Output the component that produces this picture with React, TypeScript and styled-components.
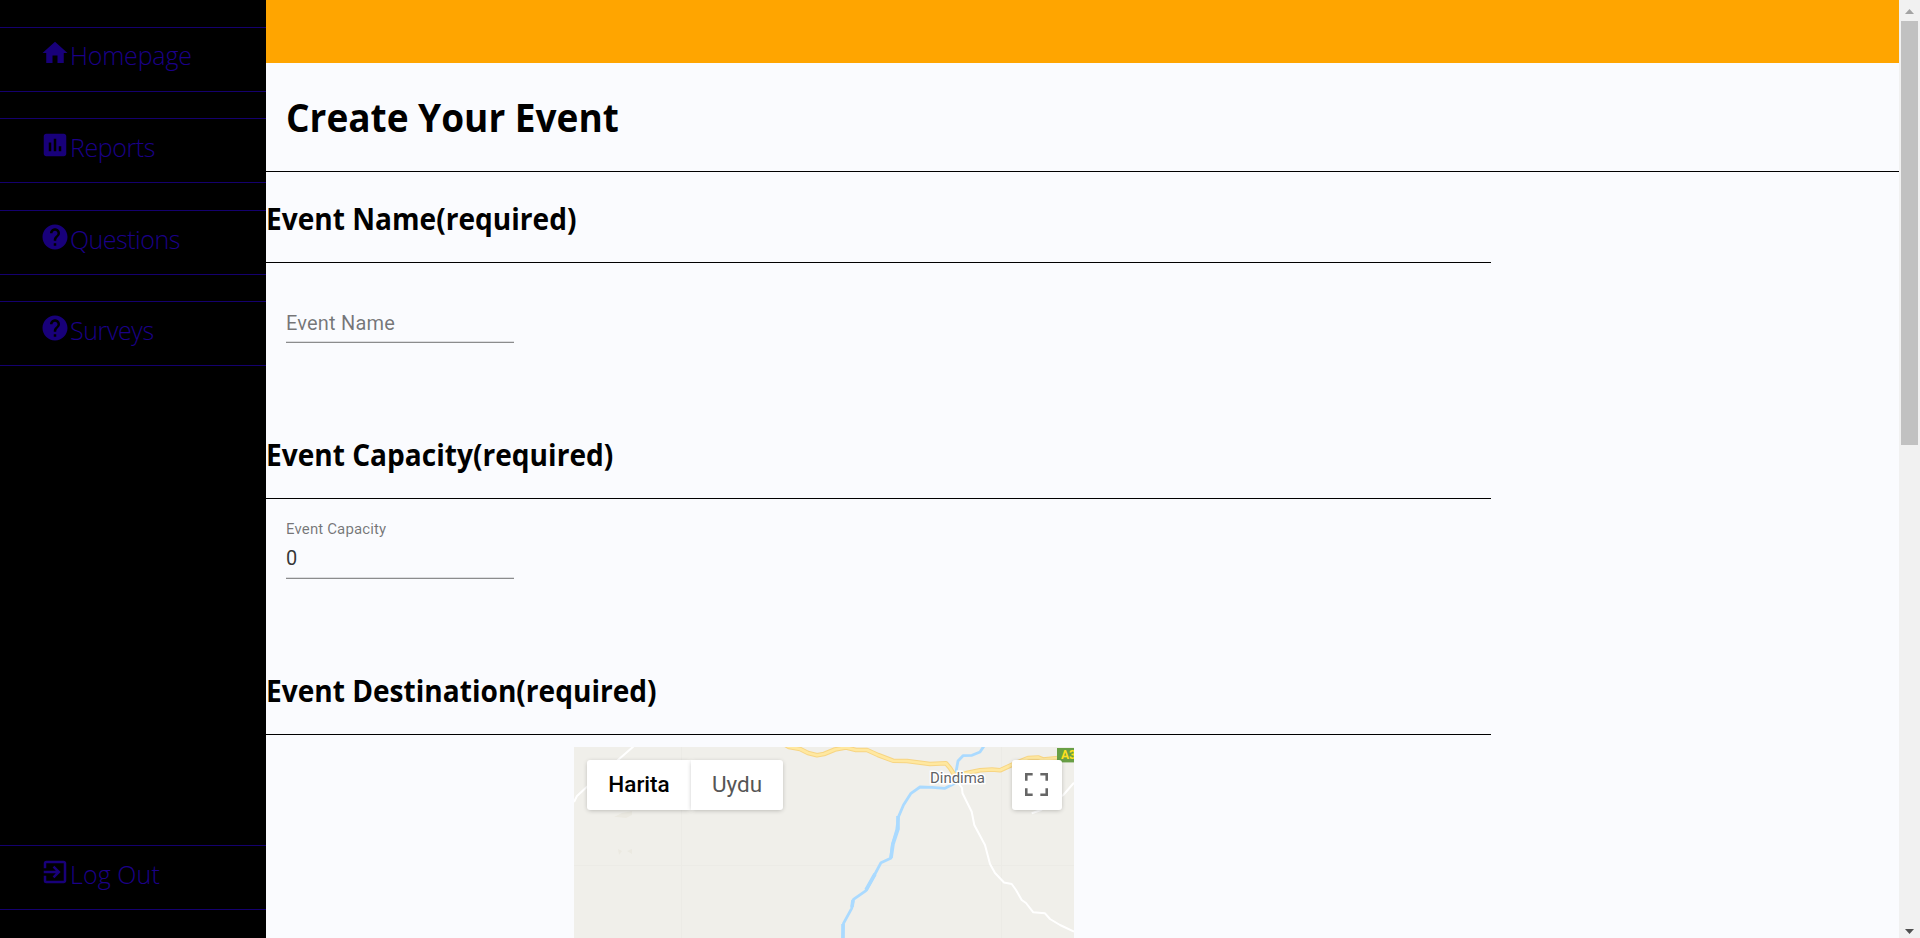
import React from "react";
import styled, { createGlobalStyle } from "styled-components";
import { MdHome, MdAssessment, MdHelp, MdExitToApp } from "react-icons/md";

const GlobalStyle = createGlobalStyle`
  *, *::before, *::after { box-sizing: border-box; }
  body { margin: 0; overflow: hidden; background: #fafbfe; }
`;

const uiFont = `"Segoe UI", "Open Sans", "Noto Sans", sans-serif`;
const inputFont = `Roboto, "Liberation Sans", sans-serif`;

const Page = styled.div`
  display: flex;
  width: 100%;
  height: 938px;
  overflow: hidden;
  background: #fafbfe;
`;

const Sidebar = styled.nav`
  display: flex;
  flex-direction: column;
  justify-content: space-between;
  width: 266px;
  flex: none;
  padding: 27px 0 28px;
  background: #000;
`;

const NavGroup = styled.div`
  display: flex;
  flex-direction: column;
  gap: 26.33px;
`;

const NavItem = styled.a<{ $top?: number }>`
  display: flex;
  height: 65px;
  padding: ${(p) => p.$top ?? 11}px 0 0 40px;
  border-top: 1px solid #14006e;
  border-bottom: 1px solid #14006e;
  color: #18007a;
  svg { width: 30px; height: 30px; flex: none; }
`;

const NavLabel = styled.span<{ $spacing: number }>`
  font: 300 25px/34px ${uiFont};
  letter-spacing: ${(p) => p.$spacing}px;
  color: #1b0088;
  white-space: nowrap;
`;

const Main = styled.main`
  flex: 1;
  min-width: 0;
  overflow: hidden;
`;

const TopBar = styled.header`
  height: 63px;
  background: #ffa500;
`;

const TitleBar = styled.div`
  height: 109px;
  padding: 27px 0 0 20px;
  border-bottom: 1px solid #000;
`;

const Title = styled.h1`
  margin: 0;
  font: 700 40px/54px ${uiFont};
  transform: scaleX(0.925);
  transform-origin: left;
  white-space: nowrap;
`;

const Section = styled.section`
  width: 1225px;
  height: 236px;
`;

const SectionHead = styled.div`
  height: 91px;
  padding-top: 26px;
  border-bottom: 1px solid #000;
`;

const SectionTitle = styled.h2`
  margin: 0;
  font: 700 30px/41px ${uiFont};
  transform: scaleX(0.936);
  transform-origin: left;
  white-space: nowrap;
`;

const Field = styled.label`
  display: flex;
  flex-direction: column;
  width: 228px;
  height: 80px;
  margin-left: 20px;
  border-bottom: 1px solid #8b8c8d;
  box-shadow: inset 0 -1px 0 #dcdde0;
  font-family: ${inputFont};
`;

const FieldLabel = styled.span`
  margin-top: 20px;
  font-size: 15px;
  line-height: 20px;
  letter-spacing: 0.14px;
  color: rgba(0, 0, 0, 0.54);
`;

const Placeholder = styled.span`
  margin-top: 48px;
  font-size: 20px;
  line-height: 24px;
  letter-spacing: 0.19px;
  color: rgba(0, 0, 0, 0.54);
`;

const FieldValue = styled.span`
  margin-top: 7px;
  font-size: 20px;
  line-height: 24px;
  color: rgba(0, 0, 0, 0.8);
`;

const Map = styled.div`
  position: relative;
  width: 500px;
  height: 400px;
  margin: 12px 0 0 308px;
  overflow: hidden;
  background: #f0efea;
  font-family: ${inputFont};
`;

const MapDrawing = styled.svg`
  display: block;
`;

const MapControls = styled.div`
  position: absolute;
  top: 13px;
  left: 13px;
  right: 12px;
  display: flex;
`;

const MapButton = styled.div<{ $width: number; $active?: boolean; $side?: "left" | "right" }>`
  display: flex;
  align-items: center;
  justify-content: center;
  width: ${(p) => p.$width}px;
  height: 50px;
  padding: ${(p) => (p.$side ? "0 0 2px" : "0 1px 1px 0")};
  margin-left: ${(p) => (p.$side ? 0 : "auto")};
  border-radius: ${(p) => (p.$side === "left" ? "3px 0 0 3px" : p.$side === "right" ? "0 3px 3px 0" : "3px")};
  background: #fff;
  box-shadow: 0 1px 5px -1px rgba(0, 0, 0, 0.3);
  font-size: 22.5px;
  font-weight: ${(p) => (p.$active ? 500 : 400)};
  color: ${(p) => (p.$active ? "#000" : "#565656")};
`;

const Scrollbar = styled.div`
  display: flex;
  flex-direction: column;
  align-items: center;
  width: 21px;
  flex: none;
  background: #f1f1f1;
`;

const Thumb = styled.div`
  width: 17px;
  height: 424px;
  background: #c1c1c1;
`;

const Arrow = styled.svg`
  display: block;
  width: 21px;
  height: 21px;
  flex: none;
  &:last-child { margin-top: auto; }
`;

const links = [
  { label: "Homepage", Icon: MdHome, spacing: -0.2, top: 10 },
  { label: "Reports", Icon: MdAssessment, spacing: -0.4 },
  { label: "Questions", Icon: MdHelp, spacing: -0.5 },
  { label: "Surveys", Icon: MdHelp, spacing: -0.4 },
];

const road =
  "M208 -4L215 0L226 2L234 6L243 8.3L250 7L261 2.5L272 0.5L282 3L293 3L304 8L319 13.7L333 14L356 17L372 16.3L376 21L381 29L394 25.7L406 23.3L418 22.5L426 23.3L439 17.3L454 11L464 10.5L469 12.5L484 11";

const river =
  "M410 -1L406 5L398 8.3L389 8.7L384 14L382 25L381.5 36L371 41.3L358 40.3L346 40L337 46.3L329.5 58L324.3 70.3L322.7 83L318.3 98L316.7 111.3L307 115.7L301 127L292 143.7L279.5 152.3L277.7 161.3L269.5 176.3L268.7 192";

function MapView() {
  return (
    <Map>
      <MapDrawing width="500" height="400" viewBox="0 0 500 400" fill="none">
        <path d="M107.5 0V400M427.5 0V400M0 118.5H500" stroke="#ecebe6" />
        <path d="M40 70L48 66L58 64V68L52 71L43 70ZM44 102L48 104L45 108ZM53 104L58 102V107Z" fill="#ebe9e1" />
        <g stroke="#fff" strokeWidth="2" strokeLinejoin="round">
          <path d="M60 -1L44 13L13 39.7L3 49L0 55" />
          <path d="M383 34L388 41L388.5 46.3L397.7 64.7L400.3 78L411 98L416 117L421 126L430 135.5L437.7 137L442 143L447.7 153L452 156L459.3 165.3L471 166.3L476 172L486 178L500 184.7" />
          <path d="M457.7 66.3L467 63L489.3 48L500 35.7" />
        </g>
        <path d={river} stroke="#aadaff" strokeWidth="2.8" strokeLinejoin="round" />
        <path d="M324 69L324 82L319 97L317 111M301 127L292 143M279 153L278 160M269 177V191" stroke="#aadaff" strokeWidth="3.6" />
        <path d={road} stroke="#f7d583" strokeWidth="4.6" strokeLinejoin="round" />
        <path d={road} stroke="#ffe8a0" strokeWidth="2.6" strokeLinejoin="round" />
        <rect x="483" y="1" width="20" height="14.4" fill="#689f45" />
        <text x="487" y="12.2" fontSize="12" fontWeight="700" fill="#ffe01e">A3</text>
        <text x="356" y="36.3" fontSize="15" textLength="55" fill="#5f6366" stroke="#fff" strokeWidth="3" paintOrder="stroke">Dindima</text>
      </MapDrawing>
      <MapControls>
        <MapButton $width={104} $side="left" $active>Harita</MapButton>
        <MapButton $width={92} $side="right">Uydu</MapButton>
        <MapButton $width={50}>
          <svg width="23" height="23" viewBox="0 0 18 18" fill="#666">
            <path d="M0 0v6h2V2h4V0H0zm16 0h-4v2h4v4h2V0h-2zm0 16h-4v2h6v-6h-2v4zM2 12H0v6h6v-2H2v-4z" />
          </svg>
        </MapButton>
      </MapControls>
    </Map>
  );
}

export default function App() {
  return (
    <>
      <GlobalStyle />
      <Page>
        <Sidebar>
          <NavGroup>
            {links.map(({ label, Icon, spacing, top }) => (
              <NavItem key={label} $top={top}>
                <Icon />
                <NavLabel $spacing={spacing}>{label}</NavLabel>
              </NavItem>
            ))}
          </NavGroup>
          <NavItem>
            <MdExitToApp />
            <NavLabel $spacing={0.1}>Log Out</NavLabel>
          </NavItem>
        </Sidebar>
        <Main>
          <TopBar />
          <TitleBar>
            <Title>Create Your Event</Title>
          </TitleBar>
          <Section>
            <SectionHead>
              <SectionTitle>Event Name(required)</SectionTitle>
            </SectionHead>
            <Field>
              <Placeholder>Event Name</Placeholder>
            </Field>
          </Section>
          <Section>
            <SectionHead>
              <SectionTitle>Event Capacity(required)</SectionTitle>
            </SectionHead>
            <Field>
              <FieldLabel>Event Capacity</FieldLabel>
              <FieldValue>0</FieldValue>
            </Field>
          </Section>
          <Section>
            <SectionHead>
              <SectionTitle>Event Destination(required)</SectionTitle>
            </SectionHead>
            <MapView />
          </Section>
        </Main>
        <Scrollbar>
          <Arrow viewBox="0 0 21 21">
            <path d="M6 14L10.5 9L15 14Z" fill="#a3a3a3" />
          </Arrow>
          <Thumb />
          <Arrow viewBox="0 0 21 21">
            <path d="M6 12L15 12L10.5 17Z" fill="#505050" />
          </Arrow>
        </Scrollbar>
      </Page>
    </>
  );
}
